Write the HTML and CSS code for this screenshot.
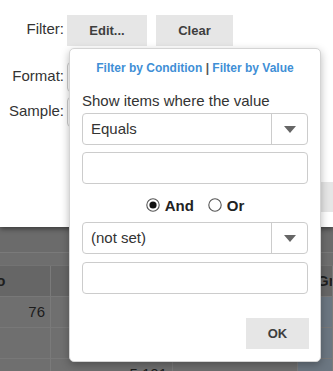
FILE: index.html
```html
<!DOCTYPE html>
<html>
<head>
<meta charset="utf-8">
<link rel="stylesheet" href="styles.css">
</head>
<body>
<div class="page">
<div class="dialog">
  <div class="row r1">
    <span class="lbl">Filter:</span>
    <button class="btn edit">Edit...</button>
    <button class="btn clear">Clear</button>
  </div>
  <div class="row r2">
    <span class="lbl">Format:</span>
    <div class="field"></div>
  </div>
  <div class="row r3">
    <span class="lbl">Sample:</span>
    <div class="field"></div>
  </div>
  <div class="actions"><button class="btn apply">Apply</button></div>
</div>
<div class="toolbar"></div>
<div class="subbar"></div>
<div class="grid">
  <div class="cell head c1">Repo</div>
  <div class="cell head"></div>
  <div class="cell head"></div>
  <div class="cell head c4">Group</div>
  <div class="cell num">76</div>
  <div class="cell"></div>
  <div class="cell"></div>
  <div class="cell blue"></div>
  <div class="cell"></div>
  <div class="cell"></div>
  <div class="cell"></div>
  <div class="cell blue"></div>
  <div class="cell"></div>
  <div class="cell num">5,101</div>
  <div class="cell"></div>
  <div class="cell blue"></div>
</div>

<div class="popup">
  <div class="tabs"><span class="tab">Filter by Condition</span> <span class="sep">|</span> <span class="tab">Filter by Value</span></div>
  <div class="caption">Show items where the value</div>
  <div class="select">
    <span class="sel-text">Equals</span>
    <span class="sel-arrow"><svg width="12" height="7" viewBox="0 0 12 7"><path d="M0 0H12L6 7Z" fill="#666"/></svg></span>
  </div>
  <div class="input"></div>
  <div class="radios">
    <span class="radio"><svg width="14" height="14" viewBox="0 0 14 14"><circle cx="7" cy="7" r="6.2" fill="#fff" stroke="#555" stroke-width="1.1"/><circle cx="7" cy="7" r="3.6" fill="#111"/></svg><b>And</b></span>
    <span class="radio"><svg width="14" height="14" viewBox="0 0 14 14"><circle cx="7" cy="7" r="6.2" fill="#fff" stroke="#555" stroke-width="1.1"/></svg><b>Or</b></span>
  </div>
  <div class="select">
    <span class="sel-text">(not set)</span>
    <span class="sel-arrow"><svg width="12" height="7" viewBox="0 0 12 7"><path d="M0 0H12L6 7Z" fill="#666"/></svg></span>
  </div>
  <div class="input second"></div>
  <div class="footer"><button class="btn ok">OK</button></div>
</div>
</div>
</body>
</html>
```
FILE: styles.css
```css
html, body {
  margin: 0;
  padding: 0;
  overflow: hidden;
}
.page {
  width: 333px;
  height: 371px;
  overflow: hidden;
  background: #6f6f6f;
  font-family: "Liberation Sans", Arial, sans-serif;
  color: #333;
  position: relative;
}
.dialog {
  position: relative;
  z-index: 1;
  height: 227px;
  box-sizing: border-box;
  padding-top: 15px;
  background: #fff;
  box-shadow: 0 2px 5px rgba(0, 0, 0, 0.45);
}
.row {
  display: flex;
  align-items: flex-start;
}
.r1 { height: 31px; }
.r2 { height: 30px; margin-top: 16px; }
.r3 { height: 30px; margin-top: 5px; }
.lbl {
  width: 64px;
  margin-right: 3px;
  text-align: right;
  font-size: 15px;
  line-height: 17px;
  padding-top: 5px;
  color: #333;
  white-space: nowrap;
}
.btn {
  border: none;
  background: #e6e6e6;
  font-family: "Liberation Sans", Arial, sans-serif;
  font-size: 13px;
  font-weight: bold;
  color: #3e3e3e;
  padding: 0;
  margin: 0;
}
.edit { width: 80px; height: 31px; margin-right: 9px; }
.clear { width: 77px; height: 31px; }
.field {
  width: 200px;
  height: 30px;
  box-sizing: border-box;
  border: 1px solid #ccc;
  border-radius: 4px;
}
.actions {
  display: flex;
  justify-content: flex-end;
  margin-top: 55px;
}
.apply { width: 70px; height: 30px; }

.toolbar {
  height: 25px;
  background: #6b6b6b;
  border-bottom: 1px solid #7a7a7a;
}
.subbar {
  height: 12px;
  background: #6e6e6e;
  border-bottom: 1px solid #737373;
}
.grid {
  display: grid;
  grid-template-columns: 91px 122px 125px 1fr;
  grid-auto-rows: 31px;
  margin-left: -40px;
}
.cell {
  box-sizing: border-box;
  border-right: 1px solid #7a7a7a;
  border-bottom: 1px solid #787878;
  font-size: 15px;
  color: #1c1c1c;
  line-height: 30px;
  white-space: nowrap;
  overflow: hidden;
}
.head {
  background: #666;
  font-weight: bold;
  color: #1e1e1e;
}
.c1 { padding-left: 8px; }
.c4 { padding-left: 19px; }
.num {
  text-align: right;
  padding-right: 5px;
}
.blue { background: #6b7681; }

.popup {
  position: absolute;
  z-index: 2;
  left: 69px;
  top: 48px;
  width: 252px;
  box-sizing: border-box;
  padding: 12px;
  background: #fff;
  border: 1px solid #d4d4d4;
  border-radius: 5px;
  box-shadow: 0 3px 8px rgba(0, 0, 0, 0.28);
}
.tabs {
  text-align: center;
  font-size: 12px;
  line-height: 15px;
  font-weight: bold;
  white-space: nowrap;
}
.tab { color: #3f8fd6; }
.sep { color: #555; }
.caption {
  margin-top: 16px;
  font-size: 15px;
  line-height: 17px;
  color: #333;
  white-space: nowrap;
}
.select {
  display: flex;
  margin-top: 4px;
  height: 32px;
  box-sizing: border-box;
  border: 1px solid #ccc;
  border-radius: 4px;
}
.sel-text {
  flex: 1;
  padding-left: 8px;
  font-size: 15px;
  line-height: 30px;
  color: #333;
}
.sel-arrow {
  width: 35px;
  border-left: 1px solid #ccc;
  display: flex;
  align-items: center;
  justify-content: center;
}
.input {
  margin-top: 7px;
  height: 32px;
  box-sizing: border-box;
  border: 1px solid #ccc;
  border-radius: 4px;
}
.input.second { margin-top: 8px; }
.radios {
  display: flex;
  justify-content: center;
  align-items: center;
  gap: 14px;
  height: 26px;
  margin: 8px 0 4px;
}
.radio {
  display: flex;
  align-items: center;
  gap: 5px;
  font-size: 15px;
  color: #222;
}
.footer {
  display: flex;
  justify-content: flex-end;
  margin-top: 24px;
  margin-right: -1px;
}
.ok { width: 63px; height: 31px; }
```
